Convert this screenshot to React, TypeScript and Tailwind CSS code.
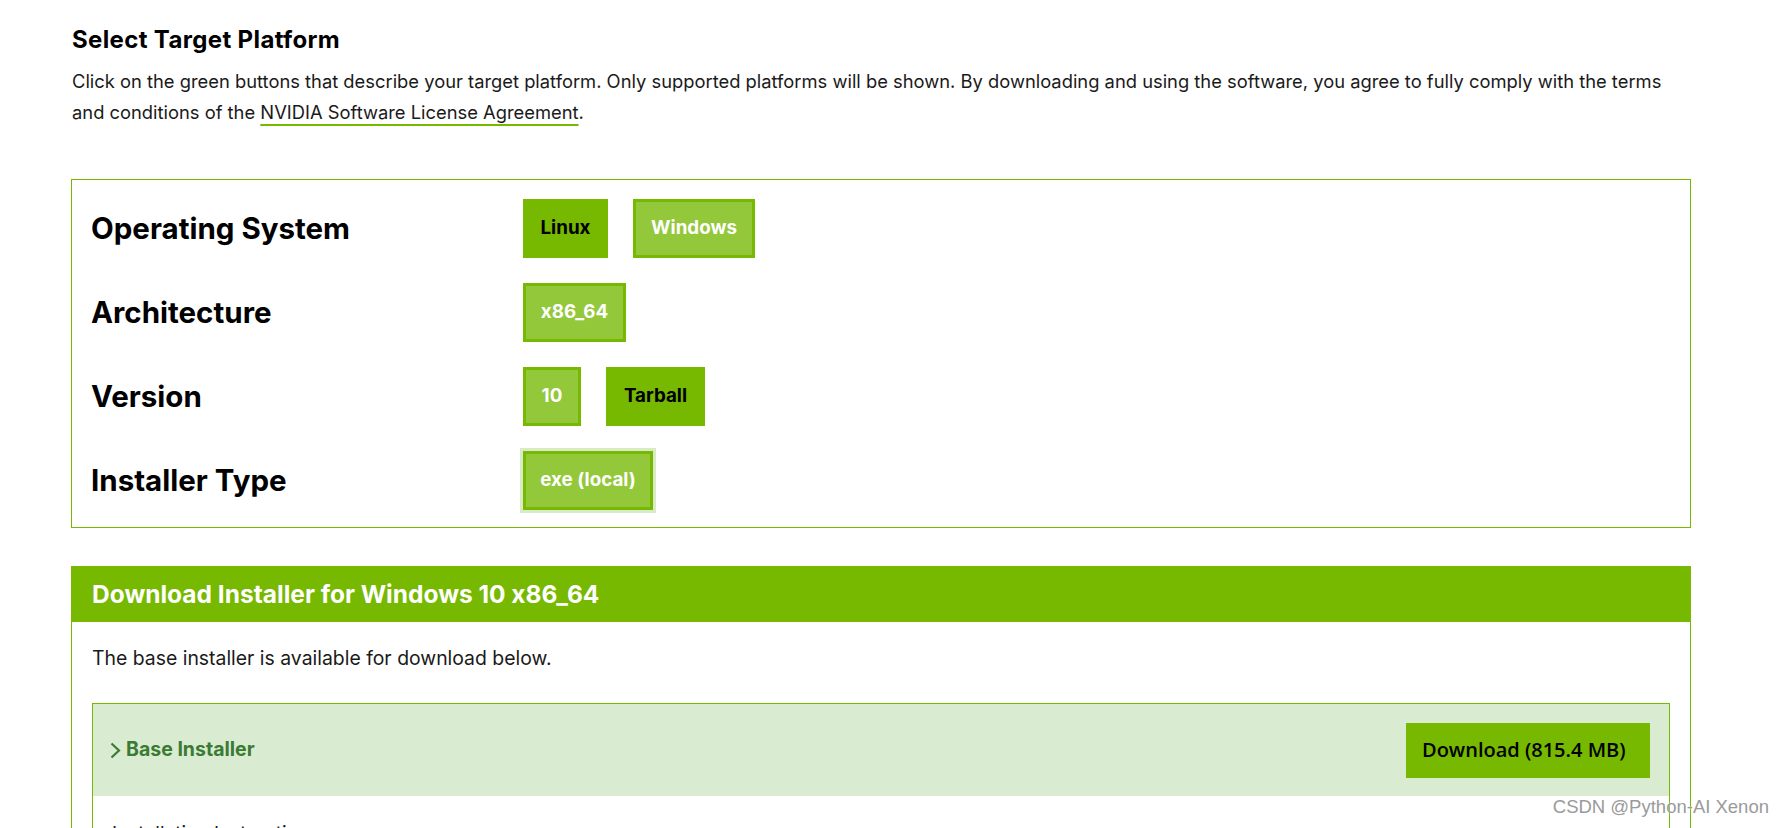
import React from "react";

const rows = [
  {
    label: "Operating System",
    options: [
      { text: "Linux", w: "w-[85px]", on: false },
      { text: "Windows", w: "w-[122px]", on: true },
    ],
  },
  { label: "Architecture", options: [{ text: "x86_64", w: "w-[103px]", on: true }] },
  {
    label: "Version",
    options: [
      { text: "10", w: "w-[58px]", on: true },
      { text: "Tarball", w: "w-[99px]", on: false },
    ],
  },
  {
    label: "Installer Type",
    options: [{ text: "exe (local)", w: "w-[130px]", on: true, focus: true }],
  },
];

function OptionButton({ text, w, on, focus }: { text: string; w: string; on: boolean; focus?: boolean }) {
  return (
    <button
      className={
        on
          ? `${w} h-[59px] border-[3px] border-[#76b900] bg-[#92c83a] text-white text-[18.8px] font-bold ${focus ? "ring-[3px] ring-[#d8ebc6]" : ""}`
          : `${w} h-[59px] border-[3px] border-[#76b900] bg-[#76b900] text-black text-[18.8px] font-bold`
      }
    >
      {text}
    </button>
  );
}

export default function App() {
  return (
    <div className="relative h-[828px] w-full overflow-hidden bg-white font-['Inter',sans-serif] text-black [font-feature-settings:'calt'_0]">
      <div className="ml-[71px] w-[1620px] pt-[25px]">
        <h2 className="text-[24px] font-bold leading-[29px] tracking-[0.35px] pl-px">Select Target Platform</h2>
        <p className="mt-3 pl-px text-[18.35px] leading-[31px] text-[#1a1a1a]">
          <span className="block whitespace-nowrap">
            Click on the green buttons that describe your target platform. Only supported platforms will be shown. By
            downloading and using the software, you agree to fully comply with the terms
          </span>
          <span className="block whitespace-nowrap">
            and conditions of the{" "}
            <a className="underline decoration-[#76b900] decoration-2 underline-offset-[5px]">
              NVIDIA Software License Agreement
            </a>
            .
          </span>
        </p>

        {/* platform picker */}
        <div className="mt-[51px] flex flex-col gap-[25px] border border-[#76b900] pb-[17px] pl-[19px] pt-[19px]">
          {rows.map((r) => (
            <div key={r.label} className="flex h-[59px] items-center">
              <div className="w-[432px] text-[29.5px] font-bold">{r.label}</div>
              <div className="flex gap-[25px]">
                {r.options.map((o) => (
                  <OptionButton key={o.text} {...o} />
                ))}
              </div>
            </div>
          ))}
        </div>

        {/* download */}
        <div className="mt-[38px] border border-[#76b900]">
          <div className="flex h-[55px] items-center bg-[#76b900] px-5 text-[24.5px] font-bold text-white">
            Download Installer for Windows 10 x86_64
          </div>
          <div className="px-5 pt-[21px]">
            <p className="text-[19.4px] leading-[31px] text-[#1a1a1a]">The base installer is available for download below.</p>
            <div className="mt-[29px] border border-[#76b900]">
              <div className="flex h-[92px] items-center justify-between bg-[#d9ecd2] pl-[17px] pr-[19px]">
                <div className="flex items-center gap-[5px] text-[19.5px] font-bold text-[#3b7a33]">
                  <svg width="11" height="17" viewBox="0 0 11 17" fill="none">
                    <path d="M1.5 1.5 L9 8.5 L1.5 15.5" stroke="#3b7a33" strokeWidth="2.2" />
                  </svg>
                  Base Installer
                </div>
                <button className="h-[55px] w-[244px] bg-[#76b900] pl-4 text-left font-['Open_Sans',sans-serif] text-[20px] font-semibold text-black">
                  Download (815.4 MB)
                </button>
              </div>
              <div className="px-[19px] pt-[24px] pb-8 text-[19px] text-[#1a1a1a]">Installation Instructions:</div>
            </div>
          </div>
        </div>
      </div>

      <div className="absolute bottom-[7px] right-[14px] font-['Liberation_Sans',Arial,sans-serif] text-[18.5px] text-[#9a9a9a] [text-shadow:0_0_2px_#fff]">
        CSDN @Python-AI Xenon
      </div>
    </div>
  );
}
